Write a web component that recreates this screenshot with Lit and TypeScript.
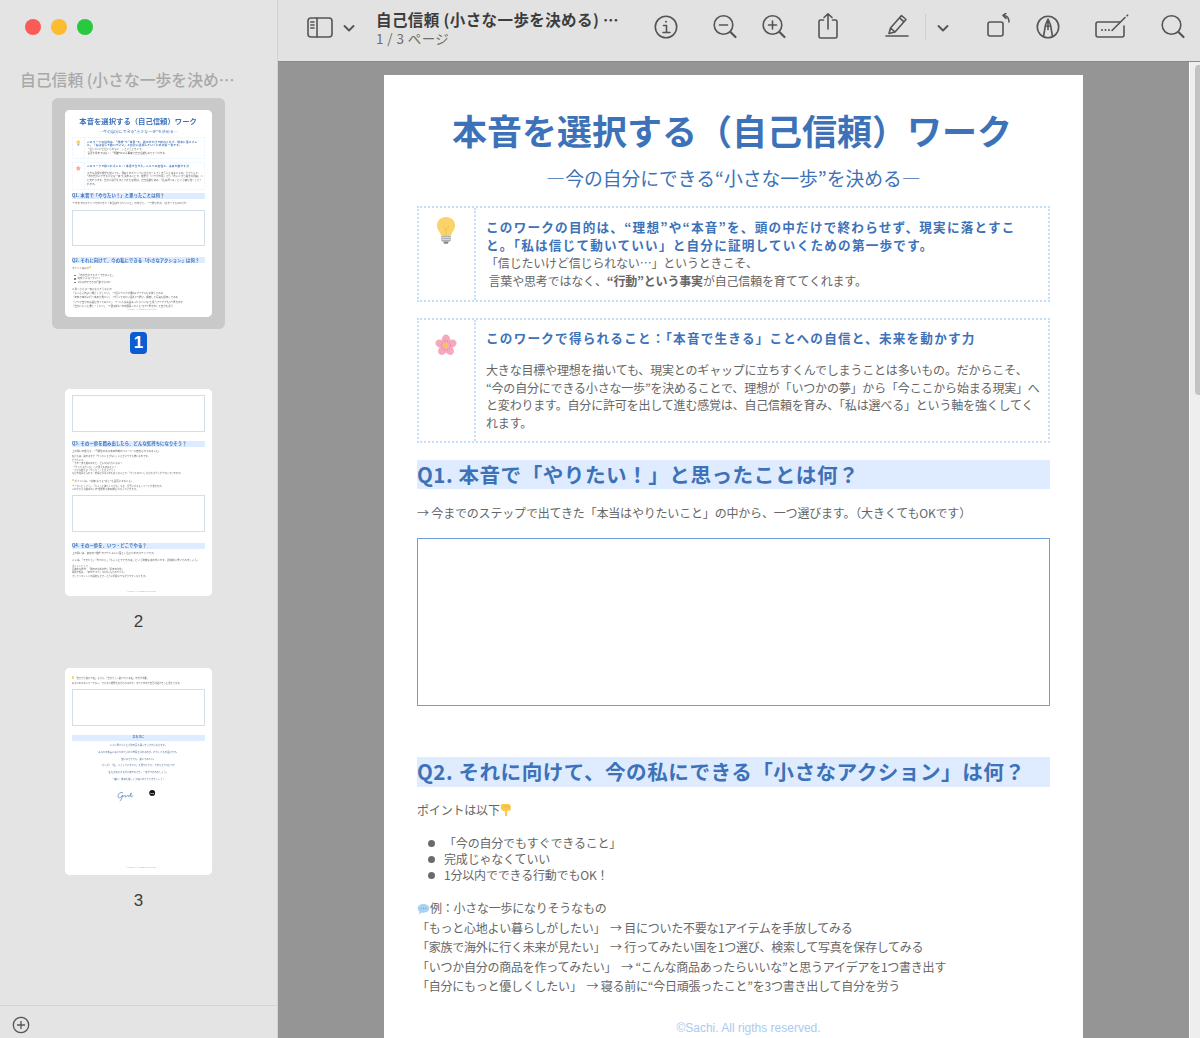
import {LitElement, html, css, svg, unsafeCSS} from 'lit';
import {customElement, property} from 'lit/decorators.js';

const FONT = unsafeCSS(`"Noto Sans CJK JP", "Noto Sans", sans-serif`);

const bulb = html`<svg class="emoji" viewBox="0 0 24 32" width="22" height="29">
  <path d="M12 1C6 1 2 5.4 2 10.6c0 4.6 3.4 7 4.6 11h10.8c1.2-4 4.6-6.4 4.6-11C22 5.4 18 1 12 1z" fill="#fbd36b"/>
  <path d="M8.5 11l3.5 4 3.5-4M12 15v6" fill="none" stroke="#eeb94e" stroke-width="1"/>
  <rect x="6.6" y="21.5" width="10.8" height="6.5" rx="1.5" fill="#a9afb5"/>
  <path d="M6.8 23.6h10.4M6.8 25.8h10.4" stroke="#dfe3e6" stroke-width="1"/>
  <path d="M9 28h6l-1 2.6h-4z" fill="#80868c"/>
</svg>`;

const flower = html`<svg class="emoji" viewBox="0 0 24 24" width="22" height="22">
  <g fill="#f5a9bc">
    <ellipse cx="12" cy="6" rx="4.4" ry="5.4"/>
    <ellipse cx="12" cy="6" rx="4.4" ry="5.4" transform="rotate(72 12 12.5)"/>
    <ellipse cx="12" cy="6" rx="4.4" ry="5.4" transform="rotate(144 12 12.5)"/>
    <ellipse cx="12" cy="6" rx="4.4" ry="5.4" transform="rotate(216 12 12.5)"/>
    <ellipse cx="12" cy="6" rx="4.4" ry="5.4" transform="rotate(288 12 12.5)"/>
  </g>
  <circle cx="12" cy="12.5" r="2.6" fill="#f7c64f"/>
  <circle cx="12" cy="12.5" r="5" fill="none" stroke="#dd5f84" stroke-width="1" stroke-dasharray="1 2"/>
</svg>`;

const hand = html`<svg class="inline-emoji" viewBox="0 0 14 16" width="12" height="14">
  <path d="M1 3C1 1.6 2 1 3 1h6c2 0 3.6 1 3.6 3v3.2c0 1-.8 1.6-1.8 1.6H8.4v5.4c0 1.6-2.6 1.6-2.6 0V9.4C3.4 9.2 1 8 1 6z" fill="#fbc84a"/>
  <path d="M5.8 2.2v3M8.2 2.2v3M10.5 2.6v3" stroke="#e9a92f" stroke-width=".6" fill="none"/>
</svg>`;

const bubble = html`<svg class="inline-emoji" viewBox="0 0 14 13" width="13" height="12">
  <path d="M7 1c3.6 0 6.4 2 6.4 4.8S10.6 10.6 7 10.6c-.6 0-1.2 0-1.7-.2L2 12.4l.7-3C1.4 8.5.6 7.3.6 5.8.6 3 3.4 1 7 1z" fill="#a9d3f5"/>
  <path d="M4 5.8h.9M6.6 5.8h.9M9.2 5.8h.9" stroke="#5a83a8" stroke-width="1"/>
</svg>`;

@customElement('doc-page')
class DocPage extends LitElement {
  @property({type: Number}) page = 1;

  static styles = css`
    :host {
      display: block;
      width: 699px;
      height: 985px;
      background: #fff;
      font-family: ${FONT};
      color: #666;
      overflow: hidden;
    }
    :host([mini]) .answer {
      border-color: #d3deec;
    }
    :host([mini]) .box,
    :host([mini]) .box-icon {
      border-color: #eaf2fb;
    }
    :host([mini]) .foot {
      color: #8fb6ea;
    }
    .sheet {
      height: 985px;
      box-sizing: border-box;
      padding: 30px 33px 0;
      display: flex;
      flex-direction: column;
    }
    .title {
      margin: 0;
      padding-right: 3px;
      font-size: 35px;
      line-height: 50px;
      font-weight: 700;
      color: #3d72b8;
      text-align: center;
      white-space: nowrap;
    }
    .subtitle {
      margin: 8px 0 0;
      font-size: 18.8px;
      line-height: 30px;
      color: #3d72b8;
      text-align: center;
      font-weight: 400;
    }
    .box {
      display: grid;
      grid-template-columns: 57px 1fr;
      border: 2px dotted #c6dff9;
      margin-top: 13px;
    }
    .box + .box {
      margin-top: 16px;
    }
    .box-icon {
      border-right: 2px dotted #c6dff9;
      display: flex;
      justify-content: center;
      align-items: flex-start;
      padding: 8px 2px 0 0;
    }
    .flower-cell {
      padding: 14px 2px 0 0;
    }
    .box-text {
      padding: 10px 12px 10px 10px;
      font-size: 12px;
      letter-spacing: -0.18px;
      line-height: 18px;
      white-space: nowrap;
    }
    .box-text.second {
      padding: 9px 12px 10px 10px;
    }
    .box-head {
      color: #3d72b8;
      font-weight: 700;
      font-size: 12.6px;
      letter-spacing: 1.22px;
    }
    .box-para {
      margin-top: 14px;
      line-height: 17.6px;
    }
    .box-text b {
      font-weight: 700;
    }
    .q {
      margin: 17px 0 0;
      padding-bottom: 1px;
      background: #dfecff;
      color: #3d72b8;
      font-size: 20.6px;
      line-height: 28px;
      font-weight: 700;
      white-space: nowrap;
      letter-spacing: 0.5px;
    }
    .q2 {
      margin-top: 51px;
      line-height: 29px;
    }
    .line {
      margin: 15px 0 0;
      font-size: 12px;
      letter-spacing: -0.18px;
      line-height: 18px;
      white-space: nowrap;
    }
    .q2 + .line {
      margin-top: 14px;
    }
    .answer {
      margin-top: 16px;
      height: 166px;
      border: 1px solid #6f9fd6;
    }
    .bullets {
      margin: 16px 0 0;
      padding: 0 0 0 11px;
      list-style: none;
      font-size: 12px;
      letter-spacing: -0.18px;
      line-height: 16px;
    }
    .bullets li {
      display: flex;
      align-items: center;
      gap: 9px;
    }
    .bullets li::before {
      content: "";
      width: 7px;
      height: 7px;
      border-radius: 50%;
      background: #6b6b6b;
    }
    .examples {
      margin-top: 15px;
      font-size: 12px;
      letter-spacing: -0.24px;
      line-height: 19.5px;
      white-space: nowrap;
    }
    .inline-emoji {
      vertical-align: -2px;
    }
    .foot {
      margin-top: auto;
      margin-bottom: 25px;
      padding-left: 30px;
      text-align: center;
      font-family: "Liberation Sans", sans-serif;
      font-size: 12px;
      line-height: 14px;
      color: #abcaf0;
    }
    .foot.low {
      margin-bottom: 10px;
    }
    .sm {
      margin-top: 9px;
      font-size: 11px;
      line-height: 16px;
      white-space: nowrap;
    }
    .q3 {
      margin-top: 40px;
    }
    .q4 {
      margin-top: 53px;
    }
    .answer.first {
      margin-top: 0;
    }
    .tip {
      display: inline-block;
      width: 8px;
      height: 12px;
      margin-right: 4px;
      border-radius: 4px;
      background: #fbd36b;
    }
    .closing {
      margin: 46px 0 0;
      text-align: center;
      font-size: 14px;
      line-height: 27px;
      background: #dfecff;
      color: #3d72b8;
      font-weight: 700;
    }
    .closing-line {
      margin: 16px 0 0;
      text-align: center;
      font-size: 11px;
      line-height: 16px;
      color: #4e6f9c;
    }
    .sign {
      display: flex;
      justify-content: center;
      align-items: flex-start;
      gap: 30px;
      margin: 40px 0 0 -20px;
    }
  `;

  renderFirst() {
    return html`
      <h1 class="title">本音を選択する（自己信頼）ワーク</h1>
      <h2 class="subtitle">―今の自分にできる“小さな一歩”を決める―</h2>
      <div class="box">
        <div class="box-icon">${bulb}</div>
        <div class="box-text">
          <div class="box-head">このワークの目的は、“理想”や“本音”を、頭の中だけで終わらせず、現実に落とすこ<br>と。「私は信じて動いていい」と自分に証明していくための第一歩です。</div>
          「信じたいけど信じられない…」というときこそ、<br>
          &nbsp;言葉や思考ではなく、<b>“行動”という事実</b>が自己信頼を育ててくれます。
        </div>
      </div>
      <div class="box">
        <div class="box-icon flower-cell">${flower}</div>
        <div class="box-text second">
          <div class="box-head">このワークで得られること：「本音で生きる」ことへの自信と、未来を動かす力</div>
          <div class="box-para">大きな目標や理想を描いても、現実とのギャップに立ちすくんでしまうことは多いもの。だからこそ、<br>“今の自分にできる小さな一歩”を決めることで、理想が「いつかの夢」から「今ここから始まる現実」へ<br>と変わります。自分に許可を出して進む感覚は、自己信頼を育み、「私は選べる」という軸を強くしてく<br>れます。</div>
        </div>
      </div>
      <h3 class="q">Q1. 本音で「やりたい！」と思ったことは何？</h3>
      <p class="line">→ 今までのステップで出てきた「本当はやりたいこと」の中から、一つ選びます。（大きくてもOKです）</p>
      <div class="answer"></div>
      <h3 class="q q2">Q2. それに向けて、今の私にできる「小さなアクション」は何？</h3>
      <p class="line">ポイントは以下${hand}</p>
      <ul class="bullets">
        <li>「今の自分でもすぐできること」</li>
        <li>完成じゃなくていい</li>
        <li>1分以内でできる行動でもOK！</li>
      </ul>
      <div class="examples">
        ${bubble}例：小さな一歩になりそうなもの<br>
        「もっと心地よい暮らしがしたい」&nbsp;&nbsp;→ 目についた不要な1アイテムを手放してみる<br>
        「家族で海外に行く未来が見たい」&nbsp;&nbsp;→ 行ってみたい国を1つ選び、検索して写真を保存してみる<br>
        「いつか自分の商品を作ってみたい」&nbsp;&nbsp;→ “こんな商品あったらいいな”と思うアイデアを1つ書き出す<br>
        「自分にもっと優しくしたい」&nbsp;&nbsp;→ 寝る前に“今日頑張ったこと”を3つ書き出して自分を労う
      </div>
      <div class="foot">©Sachi. All rigths reserved.</div>
    `;
  }

  renderSecond() {
    return html`
      <div class="answer first"></div>
      <h3 class="q q3">Q3. その一歩を踏み出したら、どんな気持ちになりそう？</h3>
      <p class="line">上の問いの答えを、“可能性のある未来時制のイメージ”に変換されてみること。</p>
      <div class="sm">私たちは、終わるまで「やったことがない」ことがいつでも怖いものです。<br>だからこそ、<br>・その一歩を踏み出すと、どんな気持ちになる？<br>・「やってよかった」って思えるのはどこ？<br>・小さな変化に「やった！」と言えそう？<br>などの質問を入れて、想像されるものを感じることで、「やってみたい」気持ちが少しずつ育っていきます。</div>
      <p class="line"><span class="tip"></span>ポイントは、“感情”よりも“感じ”を言葉にすること。</p>
      <div class="sm">→「ホッとしそう」、「ちょっと誇らしいかも」など、言葉にするとイメージが湧きます。<br>これが小さな踏み出しの“理想的な未来体験”になっていきます。</div>
      <div class="answer"></div>
      <h3 class="q q4">Q4. その一歩を、いつ・どこでやる？</h3>
      <p class="line">上の問いは、最初の“理想”のアクションに落とし込むためのステップです。</p>
      <p class="line">ここは、「できたら」「やれたら」「ちょっとでできれば」という曖昧な決め方にせず、具体的に書いてみましょう。</p>
      <div class="sm">ポイントとして：<br>具体的な日時：「明日の午前10時」「週末の午後」<br>場所や環境：「家のデスク」「お気に入りのカフェ」<br>そしてリマインドの設定などで、さらに行動につながりやすくなります。</div>
      <div class="foot low">©Sachi. All rigths reserved.</div>
    `;
  }

  renderThird() {
    return html`
      <div class="sm"><span class="tip"></span>「自分から動けた私」よりも、「自分らしく動けている私」の方が重要。</div>
      <div class="sm">あなたのエネルギーでなく、でもまた視野を広げられるので、またその中で自己対話がきっと深まります。</div>
      <div class="answer"></div>
      <div class="closing">おわりに</div>
      ${[
        'ここに書いたことが次の扉を開くきっかけになります。',
        'あなたの本音にあらためてふれた時間となれるのが、わたしたちの喜びです。',
        '迷いながらでも、動いてみたい。',
        'ゼンズ！「私、こうしていきたい」を見つけたら、そのひとつひとつが',
        '私を大切にする力に変わるから、一歩ずつ進みましょう。',
        '一緒に、未来を楽しく丁寧に育てていきましょう！',
      ].map(t => html`<p class="closing-line">${t}</p>`)}
      <div class="sign">
        <svg viewBox="0 0 120 60" width="120" height="60" fill="none" stroke="#3f6fb3" stroke-width="3">
          <path d="M34 14c-12-8-28 6-24 20 3 8 14 2 22-10-4 14-8 26-14 30M30 30c8 2 10-6 14-4s-2 8 2 8 8-10 12-8-2 8 4 6 6-16 10-18-6 18 0 18 6-6 10-4"/>
        </svg>
        <svg viewBox="0 0 40 40" width="40" height="40"><circle cx="20" cy="14" r="14" fill="#111"/><path d="M11 13c4 3 12 3 18 0v5H11z" fill="#ddd"/></svg>
      </div>
      <div class="foot">©Sachi. All rigths reserved.</div>
    `;
  }

  render() {
    const body = this.page === 1 ? this.renderFirst() : this.page === 2 ? this.renderSecond() : this.renderThird();
    return html`<div class="sheet">${body}</div>`;
  }
}

const icons = {
  sidebar: svg`<rect x="1" y="1" width="24" height="19" rx="3"/><path d="M10 1v19M3.8 5H7M3.8 8H7M3.8 11H7"/>`,
  chevron: svg`<path d="M3.5 6L8 10.5 12.5 6"/>`,
  info: svg`<circle cx="14" cy="14" r="10.7"/><path d="M11.5 12.5h3V19M11 19.5h7"/><circle cx="14" cy="8.8" r="1" fill="#555" stroke="none"/>`,
  zoomOut: svg`<circle cx="12.5" cy="12" r="9.3"/><path d="M19.5 19l5 5" stroke-width="2.2"/><path d="M8.5 12h8"/>`,
  zoomIn: svg`<circle cx="12.5" cy="12" r="9.3"/><path d="M19.5 19l5 5" stroke-width="2.2"/><path d="M8.5 12h8M12.5 8v8"/>`,
  share: svg`<path d="M9.5 7H6.6A1.6 1.6 0 0 0 5 8.600v14.800A1.6 1.6 0 0 0 6.6 25h14.800a1.6 1.6 0 0 0 1.6-1.6V8.600A1.6 1.6 0 0 0 21.4 7H18.5M14 16V1M10 4.500L14 .8l4 3.700"/>`,
  pen: svg`<path d="M7.5 15L18.5 2.500l4.500 4L12 19l-6 1.500zM16.500 4.800l4.500 4M7.500 15l4.500 4"/><path d="M3 23h22"/>`,
  rotate: svg`<rect x="6" y="9" width="15" height="14" rx="2"/><path d="M27 9C27 5 25 2.500 21.500 2.500M24 .2L21 2.500l3 2.800"/>`,
  markup: svg`<circle cx="14" cy="14" r="10.7"/><path d="M9.5 23.500L11.500 12 14 6l2.500 6 2 11.500M11.500 12.500c1 1 4 1 5 0M14 6.500v10"/>`,
  form: svg`<path d="M26 9H4a2 2 0 0 0-2 2v11a2 2 0 0 0 2 2h24a2 2 0 0 0 2-2v-9"/><path d="M18 17.500L31 4.500M33 2.800l.6-.6"/><circle cx="8" cy="17" r="1" fill="#555" stroke="none"/><circle cx="11.5" cy="17" r="1" fill="#555" stroke="none"/><circle cx="15" cy="17" r="1" fill="#555" stroke="none"/>`,
  search: svg`<circle cx="11.5" cy="12" r="9.3"/><path d="M18.500 19l5 5" stroke-width="2.2"/>`,
};

@customElement('app-root')
class AppRoot extends LitElement {
  static styles = css`
    :host {
      display: flex;
      width: 1200px;
      height: 1038px;
      overflow: hidden;
      font-family: ${FONT};
      background: #e3e3e3;
    }
    .sidebar {
      width: 277px;
      height: 1038px;
      flex: none;
      border-right: 1px solid #d2d2d2;
      display: flex;
      flex-direction: column;
      background: #e4e4e4;
    }
    .lights {
      display: flex;
      gap: 10px;
      padding: 19px 0 0 25px;
    }
    .light {
      width: 16px;
      height: 16px;
      border-radius: 50%;
    }
    .red { background: #fb5b57; }
    .yellow { background: #fdbb2f; }
    .green { background: #28c83f; }
    .doc-name {
      margin: 35px 0 0 20px;
      font-size: 15.8px;
      line-height: 20px;
      font-weight: 500;
      color: #a9a9a9;
      white-space: nowrap;
    }
    .thumb {
      display: flex;
      flex-direction: column;
      align-items: center;
    }
    .thumb-first {
      margin-top: 8px;
    }
    .frame {
      padding: 12px 13px;
      border-radius: 6px;
    }
    .frame.selected {
      background: #c9c9c9;
    }
    .mini {
      width: 147px;
      height: 207px;
      border-radius: 5px;
      overflow: hidden;
      background: #fff;
      filter: blur(0.4px);
    }
    .mini doc-page {
      zoom: 0.21;
    }
    .num {
      margin-top: 16px;
      font-family: "Liberation Sans", sans-serif;
      font-size: 17px;
      line-height: 20px;
      color: #3c3c3c;
    }
    .badge {
      margin-top: 3px;
      width: 17px;
      height: 22px;
      border-radius: 4px;
      background: #0a5cd2;
      color: #fff;
      font-family: "Liberation Sans", sans-serif;
      font-weight: 700;
      font-size: 17px;
      line-height: 22px;
      text-align: center;
    }
    .thumb-2 {
      margin-top: 35px;
    }
    .thumb-3 {
      margin-top: 36px;
    }
    .side-foot {
      margin-top: auto;
      height: 33px;
      border-top: 1px solid #d4d4d4;
      padding: 9px 0 0 12px;
      box-sizing: border-box;
    }
    .main {
      flex: 1;
      display: flex;
      flex-direction: column;
      min-width: 0;
    }
    .toolbar {
      height: 62px;
      flex: none;
      box-sizing: border-box;
      background: #e2e2e2;
      border-bottom: 1px solid #8a8a8a;
      display: flex;
      align-items: center;
      padding-left: 29px;
    }
    .toolbar svg {
      flex: none;
      fill: none;
      stroke: #555;
      stroke-width: 1.6;
      stroke-linecap: round;
      stroke-linejoin: round;
    }
    .tool-side { margin-top: -7px; }
    .toolbar .tool-chev { margin: 0 0 5px 8px; stroke-width: 1.9; }
    .titles {
      width: 250px;
      margin-left: 19px;
      flex: none;
      padding-bottom: 5px;
      white-space: nowrap;
    }
    .doc-title {
      font-size: 15.5px;
      letter-spacing: 0.4px;
      line-height: 20px;
      font-weight: 700;
      color: #3c3c3c;
    }
    .doc-pages {
      font-size: 13.5px;
      letter-spacing: 0.4px;
      line-height: 18px;
      color: #6e6e6e;
    }
    .tool {
      margin-top: -7px;
    }
    .t-info { margin-left: 26px; }
    .t-out { margin-left: 31px; }
    .t-in { margin-left: 21px; }
    .t-share { margin-left: 26px; }
    .t-pen { margin-left: 41px; }
    .divider {
      width: 1px;
      height: 26px;
      background: #cfcfcf;
      margin: -7px 0 0 14px;
      flex: none;
    }
    .toolbar .t-drop { margin: -5px 0 0 9px; stroke-width: 1.9; }
    .t-rotate { margin-left: 31px; }
    .t-markup { margin-left: 24px; }
    .t-form { margin-left: 32px; }
    .t-search { margin-left: 30px; }
    .viewer {
      flex: 1;
      background: #959595;
      display: flex;
      overflow: hidden;
      padding: 13px 0 0 106px;
    }
    .viewer doc-page {
      flex: none;
    }
    .scroll {
      flex: none;
      width: 11px;
      margin: -13px 0 0 106px;
      background: #eeeeee;
      border-left: 1px solid #fafafa;
      box-sizing: border-box;
      padding: 3px 0 0 5px;
    }
    .scroll-thumb {
      height: 330px;
      border-radius: 4px 0 0 4px;
      background: #c2c2c2;
    }
  `;

  icon(name: keyof typeof icons, cls: string, w = 28, h = 28) {
    return html`<svg class=${cls} viewBox="0 0 ${w} ${h}" width=${w} height=${h}>${icons[name]}</svg>`;
  }

  render() {
    return html`
      <aside class="sidebar">
        <div class="lights">
          <span class="light red"></span>
          <span class="light yellow"></span>
          <span class="light green"></span>
        </div>
        <div class="doc-name">自己信頼 (小さな一歩を決め…</div>
        <div class="thumb thumb-first">
          <div class="frame selected"><div class="mini"><doc-page mini page="1"></doc-page></div></div>
          <div class="badge">1</div>
        </div>
        <div class="thumb thumb-2">
          <div class="mini"><doc-page mini page="2"></doc-page></div>
          <div class="num">2</div>
        </div>
        <div class="thumb thumb-3">
          <div class="mini"><doc-page mini page="3"></doc-page></div>
          <div class="num">3</div>
        </div>
        <div class="side-foot">
          <svg viewBox="0 0 18 18" width="18" height="18" fill="none" stroke="#555" stroke-width="1.3"><circle cx="9" cy="9" r="7.7"/><path d="M9 5v8M5 9h8"/></svg>
        </div>
      </aside>
      <div class="main">
        <header class="toolbar">
          ${this.icon('sidebar', 'tool-side', 26, 21)}
          ${this.icon('chevron', 'tool-chev', 16, 16)}
          <div class="titles">
            <div class="doc-title">自己信頼 (小さな一歩を決める) …</div>
            <div class="doc-pages">1 / 3 ページ</div>
          </div>
          ${this.icon('info', 'tool t-info')}
          ${this.icon('zoomOut', 'tool t-out')}
          ${this.icon('zoomIn', 'tool t-in')}
          ${this.icon('share', 'tool t-share')}
          ${this.icon('pen', 'tool t-pen')}
          <div class="divider"></div>
          ${this.icon('chevron', 't-drop', 16, 16)}
          ${this.icon('rotate', 'tool t-rotate')}
          ${this.icon('markup', 'tool t-markup')}
          ${this.icon('form', 'tool t-form', 36, 28)}
          ${this.icon('search', 'tool t-search')}
        </header>
        <div class="viewer">
          <doc-page page="1"></doc-page>
          <div class="scroll"><div class="scroll-thumb"></div></div>
        </div>
      </div>
    `;
  }
}
